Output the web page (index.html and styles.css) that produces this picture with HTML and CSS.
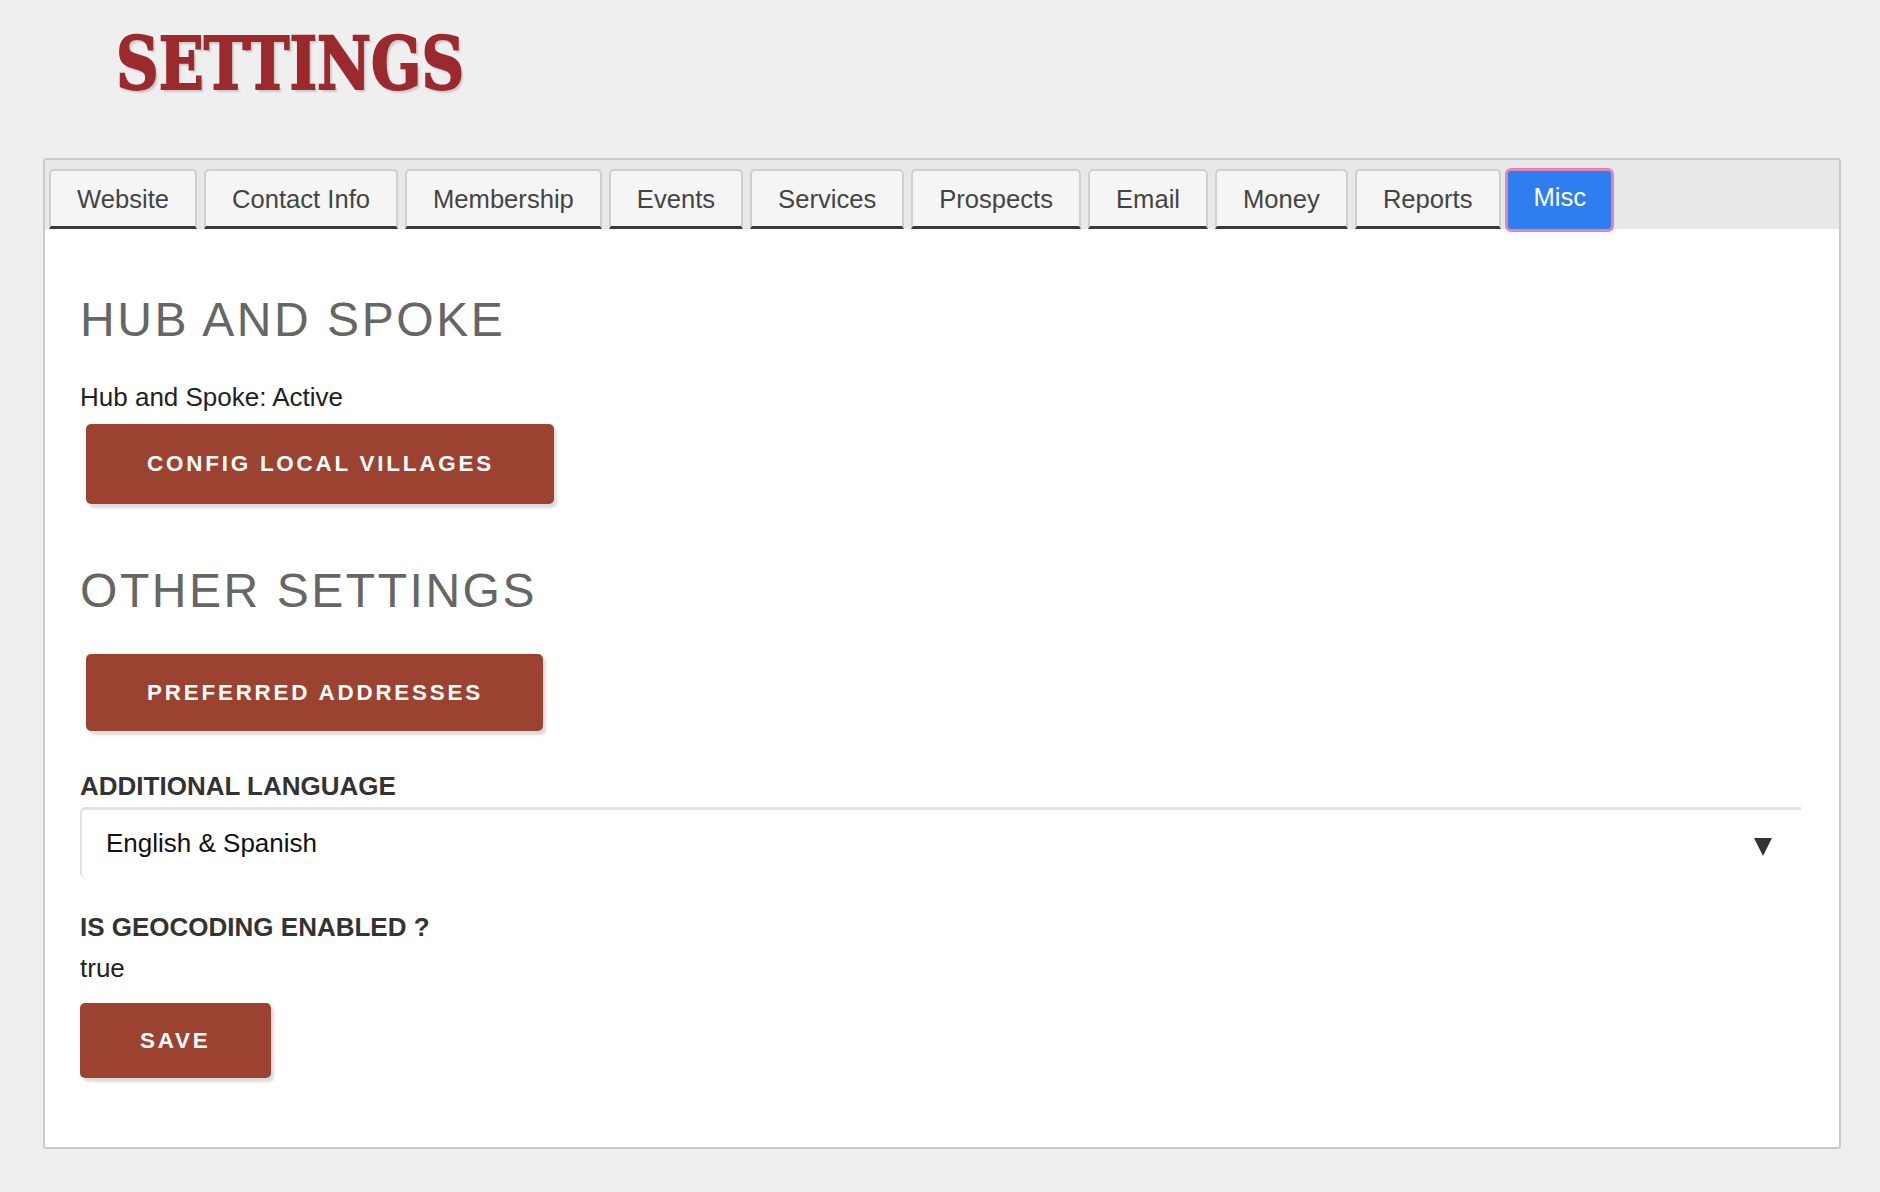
FILE: index.html
```html
<!DOCTYPE html>
<html lang="en">
<head>
<meta charset="utf-8">
<title>Settings</title>
<link rel="stylesheet" href="styles.css">
</head>
<body>
<header class="page-header">
  <h1 class="page-title">SETTINGS</h1>
</header>
<main class="panel">
  <nav class="tabs">
    <a class="tab">Website</a>
    <a class="tab">Contact Info</a>
    <a class="tab">Membership</a>
    <a class="tab">Events</a>
    <a class="tab">Services</a>
    <a class="tab">Prospects</a>
    <a class="tab">Email</a>
    <a class="tab">Money</a>
    <a class="tab">Reports</a>
    <a class="tab tab-active">Misc</a>
  </nav>
  <section class="content">
    <h2 class="section-title">HUB AND SPOKE</h2>
    <p class="status">Hub and Spoke: Active</p>
    <button class="btn btn-indent btn-config">CONFIG LOCAL VILLAGES</button>

    <h2 class="section-title section-other">OTHER SETTINGS</h2>
    <button class="btn btn-indent btn-pref">PREFERRED ADDRESSES</button>

    <label class="field-label label-lang">ADDITIONAL LANGUAGE</label>
    <div class="select">
      <span class="select-value">English &amp; Spanish</span>
      <span class="select-arrow"></span>
    </div>

    <label class="field-label label-geo">IS GEOCODING ENABLED ?</label>
    <p class="value">true</p>
    <button class="btn btn-save">SAVE</button>
  </section>
</main>
</body>
</html>
```

FILE: styles.css
```css
html, body {
  margin: 0;
  padding: 0;
}
body {
  background: #efefef;
  font-family: "Liberation Sans", Arial, Helvetica, sans-serif;
  color: #333;
  width: 1880px;
  min-height: 1192px;
}
.page-header {
  height: 158px;
  padding-left: 116px;
  box-sizing: border-box;
}
.page-title {
  display: inline-block;
  margin: 0;
  padding-top: 20px;
  font-family: "Roboto Slab", "Rockwell", "DejaVu Serif", "Liberation Serif", serif;
  font-weight: 700;
  font-size: 72px;
  line-height: 88px;
  color: #9b2a2f;
  -webkit-text-stroke: 2px #9b2a2f;
  text-shadow: 3px 3px 2px #c9c9c9;
  letter-spacing: 0;
  transform: scaleX(0.82);
  transform-origin: left center;
}
.panel {
  margin-left: 43px;
  width: 1798px;
  height: 991px;
  box-sizing: border-box;
  border: 2px solid #cacaca;
  border-radius: 3px;
  background: #fff;
}
.tabs {
  display: flex;
  gap: 7px;
  align-items: flex-start;
  background: #e8e8e8;
  height: 69px;
  box-sizing: border-box;
  padding: 9px 0 0 4px;
}
.tab {
  display: flex;
  align-items: center;
  height: 60px;
  box-sizing: border-box;
  padding: 0 26px;
  background: #f5f5f5;
  border: 2px solid #cfcfcf;
  border-bottom: 3px solid #3a3a3a;
  border-radius: 5px 5px 0 0;
  font-size: 25.6px;
  color: #444;
  padding-top: 1px;
}
.tab-active {
  background: #2f7eef;
  color: #fff;
  border: 3px solid #e186b4;
  border-radius: 6px;
  height: 64px;
  margin-top: -1px;
  margin-left: -3px;
  padding: 0 25px 5px 26px;
}
.content {
  padding: 62px 35px 0;
}
.section-title {
  margin: 0;
  font-family: "Liberation Sans", Arial, sans-serif;
  font-weight: 400;
  font-size: 48px;
  line-height: 57.6px;
  letter-spacing: 2.55px;
  color: #666;
}
.status {
  margin: 33px 0 0;
  font-size: 26px;
  line-height: 31px;
  color: #222;
}
.btn {
  display: block;
  border: none;
  border-radius: 5px;
  background: #9b4330;
  color: #fff;
  font-family: "Liberation Sans", Arial, sans-serif;
  font-weight: 700;
  font-size: 22.4px;
  letter-spacing: 2.8px;
  line-height: 28px;
  box-shadow: 3px 4px 3px rgba(0, 0, 0, 0.14);
  cursor: pointer;
}
.btn-indent {
  margin-left: 6px;
}
.btn-config {
  margin-top: 11px;
  padding: 26px 60px 26px 61px;
}
.section-other {
  margin-top: 58px;
}
.btn-pref {
  margin-top: 35px;
  padding: 25px 60px 24px 61px;
}
.field-label {
  display: block;
  font-weight: 700;
  font-size: 26px;
  line-height: 31px;
  color: #333;
}
.label-lang {
  margin-top: 40px;
}
.select {
  margin-top: 5px;
  height: 71px;
  width: 1721px;
  box-sizing: border-box;
  display: flex;
  align-items: center;
  justify-content: space-between;
  padding: 0 29px 0 24px;
  border-top: 3px solid #e2e2e2;
  border-left: 2px solid #e4e4e4;
  border-radius: 5px 0 0 5px;
  font-size: 26px;
  color: #111;
}
.select-value {
  padding-bottom: 2px;
}
.select-arrow {
  width: 0;
  height: 0;
  border-left: 9.5px solid transparent;
  border-right: 9.5px solid transparent;
  border-top: 18px solid #333;
  margin-top: 6px;
}
.label-geo {
  margin-top: 34px;
}
.value {
  margin: 10px 0 0;
  font-size: 26px;
  line-height: 31px;
  color: #222;
}
.btn-save {
  margin-top: 19px;
  padding: 24px 60px 23px 60px;
}
```
